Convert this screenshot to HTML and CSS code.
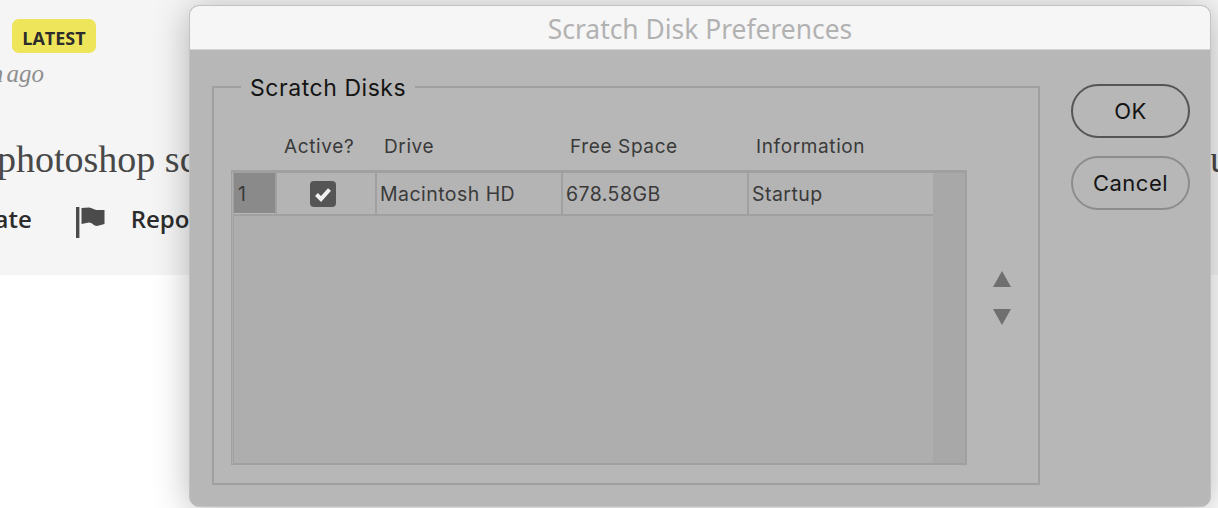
FILE: index.html
```html
<!DOCTYPE html>
<html lang="en">
<head>
    <meta charset="UTF-8">
    <meta name="viewport" content="width=device-width, initial-scale=1.0">
    <title>Scratch Disk Preferences</title>
    <link rel="stylesheet" href="styles.css">
</head>
<body>
    <!-- Forum post behind the dialog -->
    <div class="post">
        <span class="badge">LATEST</span>
        <div class="post-time">a month ago</div>
        <div class="post-text"><span>photoshop scratch</span><span>you</span></div>
        <div class="post-actions">
            <span class="action-text">Translate</span>
            <svg class="flag-icon" width="30" height="32" viewBox="0 0 30 32">
                <rect x="0" y="0" width="3.4" height="31" fill="#4b4b4b"/>
                <path d="M5.5 1 L13 0.5 C16 0.5 18 3 20.5 3 L28.5 3 L28.5 17 L21 19 C18 19 16 15.5 13 15.5 L5.5 17 Z" fill="#4b4b4b"/>
            </svg>
            <span class="action-text">Report</span>
        </div>
    </div>

    <!-- Scratch disk dialog -->
    <div class="dialog">
        <div class="dialog-title">Scratch Disk Preferences</div>
        <div class="dialog-body">
            <fieldset class="group">
                <legend>Scratch Disks</legend>
                <div class="table-area">
                    <div class="table-wrap">
                        <div class="table-head">
                            <span class="head-active">Active?</span>
                            <span class="head-col">Drive</span>
                            <span class="head-col">Free Space</span>
                            <span>Information</span>
                        </div>
                        <div class="table-box">
                            <div class="table-rows">
                                <div class="row">
                                    <div class="cell cell-num">1</div>
                                    <div class="cell cell-check">
                                        <svg width="26" height="26" viewBox="0 0 26 26">
                                            <rect width="26" height="26" rx="4" fill="#555"/>
                                            <path d="M6.5 13.5 L11 18 L19.5 8.5" fill="none" stroke="#f2f2f2" stroke-width="4"/>
                                        </svg>
                                    </div>
                                    <div class="cell cell-drive">Macintosh HD</div>
                                    <div class="cell cell-space">678.58GB</div>
                                    <div class="cell cell-info">Startup</div>
                                </div>
                            </div>
                            <div class="scrollbar"></div>
                        </div>
                    </div>
                    <div class="arrows">
                        <svg width="18" height="16" viewBox="0 0 18 16"><path d="M9 0 L18 16 L0 16 Z" fill="#6f6f6f"/></svg>
                        <svg width="18" height="16" viewBox="0 0 18 16"><path d="M0 0 L18 0 L9 16 Z" fill="#6f6f6f"/></svg>
                    </div>
                </div>
            </fieldset>
            <div class="buttons">
                <button class="btn btn-default">OK</button>
                <button class="btn">Cancel</button>
            </div>
        </div>
    </div>
</body>
</html>
```

FILE: styles.css
```css
html, body {
    margin: 0;
    padding: 0;
    height: 508px;
    overflow: hidden;
    background-color: #fff;
}
body {
    position: relative;
    width: 1218px;
}
.post {
    height: 275px;
    background-color: #f5f5f5;
    overflow: hidden;
    padding-top: 19px;
    box-sizing: border-box;
}
.badge {
    display: block;
    width: 84px;
    height: 34px;
    margin-left: 12px;
    background-color: #eee55a;
    border-radius: 7px;
    color: #2c2c2c;
    font-family: "Open Sans", sans-serif;
    font-size: 18px;
    font-weight: 700;
    line-height: 38px;
    text-align: center;
}
.post-time {
    margin: 5px 0 0 -75px;
    color: #8e8e8e;
    font-family: "Liberation Serif", serif;
    font-size: 25px;
    font-style: italic;
    line-height: 32px;
    word-spacing: -3px;
}
.post-text {
    display: flex;
    justify-content: space-between;
    width: 1232px;
    margin: 47px 0 0 -3px;
    color: #484848;
    font-family: "Liberation Serif", serif;
    font-size: 38px;
    line-height: 44px;
}
.post-actions {
    display: flex;
    align-items: center;
    margin: 19px 0 0 -77px;
    color: #2c2c2c;
    font-family: "Open Sans", sans-serif;
    font-size: 24px;
    font-weight: 600;
    height: 36px;
}
.flag-icon {
    margin: 9px 25px 0 44px;
}

/* dialog sits over the page */
.dialog {
    position: absolute;
    left: 189px;
    top: 5px;
    width: 1022px;
    height: 502px;
    box-sizing: border-box;
    border: 1px solid #c2c2c2;
    border-radius: 10px;
    overflow: hidden;
    background-color: #b7b7b7;
    box-shadow: 0 4px 36px rgba(0, 0, 0, 0.28);
    font-family: Inter, sans-serif;
    color: #141414;
}
.dialog-title {
    height: 43px;
    background-color: #f6f6f6;
    border-bottom: 1px solid #d4d4d4;
    color: #b2b2b2;
    font-family: "Noto Sans", sans-serif;
    font-size: 26.4px;
    line-height: 46px;
    text-align: center;
}
.dialog-body {
    display: flex;
    align-items: flex-start;
    padding: 0 20px 0 22px;
}
.group {
    flex: none;
    width: 828px;
    height: 411px;
    box-sizing: border-box;
    margin: 24px 31px 0 0;
    padding: 0 0 0 17px;
    border: 2px solid #a0a0a0;
}
.group legend {
    margin-left: 10px;
    padding: 2px 9px 0;
    font-size: 23px;
    letter-spacing: 0.55px;
    line-height: 24px;
}
.table-area {
    display: flex;
}
.table-wrap {
    width: 736px;
}
.table-head {
    display: flex;
    height: 70px;
    box-sizing: border-box;
    padding: 36px 0 0 53px;
    color: #3a3a3a;
    font-size: 19px;
    letter-spacing: 0.62px;
    line-height: 22px;
}
.head-active {
    width: 100px;
}
.head-col {
    width: 186px;
}
.table-box {
    display: flex;
    height: 295px;
    box-sizing: border-box;
    border: 2px solid #a0a0a0;
    border-top-width: 3px;
    border-left: 3px double #a0a0a0;
    background-color: #aeaeae;
}
.table-rows {
    flex: 1;
}
.scrollbar {
    width: 32px;
    background-color: #a8a8a8;
}
.row {
    display: flex;
    height: 43px;
    background-color: #b4b4b4;
    border-bottom: 2px solid #a0a0a0;
    box-sizing: border-box;
    color: #3a3a3a;
    font-size: 19.5px;
    letter-spacing: 0.45px;
}
.cell {
    display: flex;
    align-items: center;
    box-sizing: border-box;
    border-right: 2px solid #a0a0a0;
    padding: 0 0 0 3px;
}
.cell-num {
    width: 43px;
    background-color: #8a8a8a;
    box-shadow: inset 0 -1px 0 #b8b8b8;
    padding-left: 4px;
}
.cell-check {
    width: 100px;
    justify-content: center;
    padding: 0 6px 0 0;
}
.cell-drive { width: 186px; }
.cell-space { width: 186px; }
.cell-info { flex: 1; border-right: none; }
.arrows {
    display: flex;
    flex-direction: column;
    gap: 22px;
    margin: 171px 0 0 26px;
}
.buttons {
    display: flex;
    flex-direction: column;
    gap: 18px;
    margin-top: 34px;
}
.btn {
    width: 119px;
    height: 54px;
    box-sizing: border-box;
    border: 2px solid #8c8c8c;
    border-radius: 27px;
    background: transparent;
    color: #141414;
    font-family: Inter, sans-serif;
    font-size: 22px;
    letter-spacing: 0.5px;
    padding: 0;
}
.btn-default {
    border-color: #555;
}
```
